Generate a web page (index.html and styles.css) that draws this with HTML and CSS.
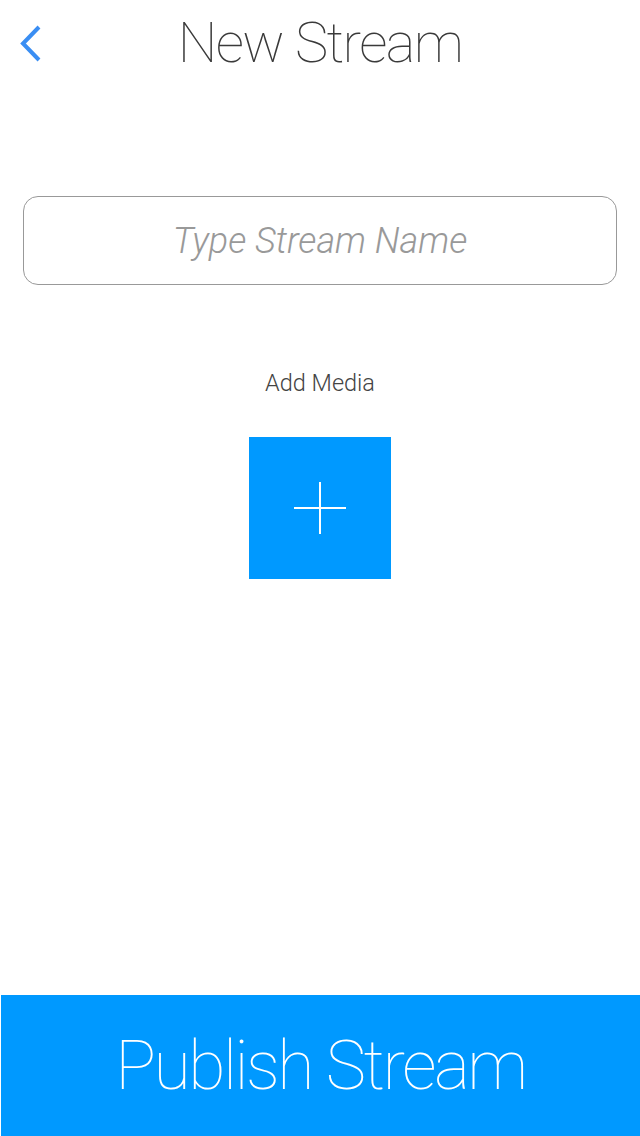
FILE: index.html
```html
<!DOCTYPE html>
<html>
<head>
<meta charset="utf-8">
<link rel="stylesheet" href="styles.css">
</head>
<body>
<div class="page">
  <header class="header">
    <div class="back">
      <svg width="30" height="40" viewBox="0 0 30 40"><polyline points="20,3 4,19.5 20,36" fill="none" stroke="#3a8ef3" stroke-width="4"/></svg>
    </div>
    <h1 class="title">New Stream</h1>
    <div></div>
  </header>
  <div class="name-field">
    <span class="placeholder">Type Stream Name</span>
  </div>
  <div class="media">
    <div class="media-label">Add Media</div>
    <div class="media-add">
      <svg width="54" height="54" viewBox="0 0 54 54"><path d="M27 1v52M1 27h52" stroke="#fff" stroke-width="2"/></svg>
    </div>
  </div>
  <div class="publish">Publish Stream</div>
</div>
</body>
</html>
```
FILE: styles.css
```css
html, body {
  margin: 0;
  padding: 0;
  background: #fff;
}
.page {
  width: 640px;
  height: 1136px;
  display: flex;
  flex-direction: column;
  font-family: Roboto, "Liberation Sans", sans-serif;
}
.header {
  display: grid;
  grid-template-columns: 1fr auto 1fr;
  align-items: center;
  height: 86px;
}
.back {
  padding-left: 19px;
  padding-top: 2px;
  display: flex;
}
.title {
  margin: 0;
  font-weight: 100;
  font-size: 56px;
  color: #3a3a3a;
  letter-spacing: -1.6px;
  line-height: 1;
}
.name-field {
  margin: 110px 23px 0 23px;
  height: 87px;
  border: 1px solid #999;
  border-radius: 15px;
  display: flex;
  align-items: center;
  justify-content: center;
}
.placeholder {
  font-style: italic;
  font-weight: 300;
  font-size: 36px;
  color: #999;
}
.media {
  display: flex;
  flex-direction: column;
  align-items: center;
  margin-top: 83px;
}
.media-label {
  font-size: 23.5px;
  font-weight: 300;
  color: #444;
  line-height: 30px;
}
.media-add {
  margin-top: 39px;
  width: 142px;
  height: 142px;
  background: #0099ff;
  display: flex;
  align-items: center;
  justify-content: center;
}
.publish {
  margin-top: auto;
  margin-left: 1px;
  height: 141px;
  background: #0099ff;
  color: #fff;
  font-weight: 100;
  font-size: 68px;
  letter-spacing: -2.5px;
  display: flex;
  align-items: center;
  justify-content: center;
}
```
